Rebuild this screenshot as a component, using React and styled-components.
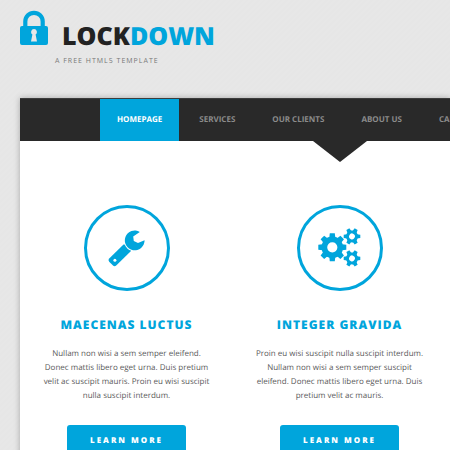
import React from "react";
import styled, { createGlobalStyle } from "styled-components";

const BLUE = "#00a5dc";
const DARK = "#292929";

const GlobalStyle = createGlobalStyle`
  *, *::before, *::after { box-sizing: border-box; }
  html { height: 100%; overflow: hidden; }
  body {
    margin: 0;
    min-height: 100%;
    overflow: hidden;
    background: repeating-linear-gradient(135deg, #e7e7e7 0 2px, #e6e6e6 2px 4px);
    color: #5a5a5a;
    font-family: "Open Sans", "Noto Sans", sans-serif;
    text-rendering: geometricPrecision;
  }
`;

const Header = styled.header`
  height: 98px;
  padding: 10px 20px 0;
`;

const Brand = styled.a`
  display: flex;
  align-items: flex-start;
  gap: 14px;
  color: #222;
  text-decoration: none;
`;

const LockIcon = styled.svg`
  display: block;
  width: 28px;
  height: 35px;
`;

const SiteName = styled.h1`
  margin: 9px 0 0;
  font-size: 25px;
  line-height: 34px;
  font-weight: 800;
  span { color: ${BLUE}; }
`;

const Tagline = styled.p`
  margin: 3px 0 0 35px;
  font-size: 7px;
  line-height: 12px;
  letter-spacing: 1px;
  text-transform: uppercase;
  color: #777;
`;

const Panel = styled.div`
  margin-left: 20px;
  background: #fff;
  box-shadow: 0 0 6px rgba(0, 0, 0, 0.28);
`;

const Nav = styled.nav`
  position: relative;
  background: ${DARK};
  border-top: 1px solid #3c3c3c;
  padding-left: 80px;
  &::after {
    content: "";
    position: absolute;
    top: 100%;
    left: 293px;
    border: solid transparent;
    border-width: 21px 27px 0;
    border-top-color: ${DARK};
  }
`;

const NavList = styled.ul`
  display: flex;
  gap: 3px;
  margin: 0;
  padding: 0;
  list-style: none;
`;

const NavLink = styled.a`
  display: block;
  padding: 0 17px;
  font-size: 8px;
  line-height: 42px;
  font-weight: 700;
  text-transform: uppercase;
  text-decoration: none;
  white-space: nowrap;
  color: ${(p) => (p.$active ? "#fff" : "#8b8b8b")};
  background: ${(p) => (p.$active ? BLUE : "transparent")};
`;

const Features = styled.main`
  display: grid;
  grid-template-columns: repeat(auto-fit, minmax(200px, 1fr));
  padding: 64px 4px 40px 0;
`;

const Feature = styled.section`
  display: flex;
  flex-direction: column;
  align-items: center;
  padding: 0 20px;
  text-align: center;
`;

const IconRing = styled.div`
  display: grid;
  place-items: center;
  width: 86px;
  height: 86px;
  border: 3px solid ${BLUE};
  border-radius: 50%;
  svg { display: block; width: 80px; height: 80px; }
`;

const FeatureTitle = styled.h2`
  margin: 25px 0 0;
  font-size: 12px;
  line-height: 18px;
  font-weight: 800;
  letter-spacing: 1px;
  text-transform: uppercase;
  white-space: nowrap;
  color: ${BLUE};
`;

const FeatureText = styled.p`
  margin: 13px 0 0;
  font-size: 8px;
  line-height: 14px;
`;

const ButtonLink = styled.a`
  margin-top: 22px;
  padding: 0 23px;
  border-radius: 3px;
  background: ${BLUE};
  color: #fff;
  font-size: 8px;
  line-height: 31px;
  font-weight: 800;
  letter-spacing: 2px;
  text-transform: uppercase;
  text-decoration: none;
  white-space: nowrap;
`;

function Lock() {
  return (
    <LockIcon viewBox="0 0 28 35" aria-hidden="true">
      <path d="M5.3 17V11.5a8.7 8.7 0 0 1 17.4 0V17" fill="none" stroke={BLUE} strokeWidth="4.2" />
      <rect x="0" y="16" width="28" height="19" rx="2" fill={BLUE} />
      <path d="M14 19a3 3 0 0 0-1.6 5.5L11 31.5h6l-1.4-7A3 3 0 0 0 14 19z" fill="#e7e7e7" />
    </LockIcon>
  );
}

function Wrench() {
  return (
    <svg viewBox="0 0 80 80" fill={BLUE} aria-hidden="true">
      <path d="M36.5 36.6h3l4.5 4.5v2L29.2 57.6q-1.7 1.5-3.2 0l-3.8-3.8q-1.5-1.7 0-3.2z" />
      <circle cx="27.9" cy="52.2" r="1.5" fill="#fff" />
      <circle cx="47.8" cy="32.6" r="10.8" fill="#fff" />
      <path d="M52.8 23.9a9.9 9.9 0 1 0 4.8 8.4L51 34.9l-4.2-1.8-.6-4.6z" />
    </svg>
  );
}

function Gear({ x, y, radius, hole, teeth, root, tooth }) {
  const angles = Array.from({ length: teeth }, (_, i) => (i * 360) / teeth);
  return (
    <g transform={`translate(${x} ${y})`}>
      <circle r={(root + hole) / 2} fill="none" stroke={BLUE} strokeWidth={root - hole} />
      {angles.map((angle) => (
        <path
          key={angle}
          transform={`rotate(${angle})`}
          d={`M${-tooth - 0.5} ${1 - root}L${-tooth} ${-radius}H${tooth}L${tooth + 0.5} ${1 - root}Z`}
          fill={BLUE}
        />
      ))}
    </g>
  );
}

function Gears() {
  return (
    <svg viewBox="0 0 80 80" aria-hidden="true">
      <Gear x={32.3} y={39.3} radius={14} root={10.8} hole={5.1} teeth={8} tooth={2.5} />
      <g transform="rotate(30 52 28.4)">
        <Gear x={52} y={28.4} radius={8.3} root={6} hole={2.9} teeth={6} tooth={1.7} />
      </g>
      <g transform="rotate(30 52 50.4)">
        <Gear x={52} y={50.4} radius={8.3} root={6} hole={2.9} teeth={6} tooth={1.7} />
      </g>
    </svg>
  );
}

const links = ["Homepage", "Services", "Our Clients", "About Us", "Careers"];

const features = [
  {
    title: "Maecenas luctus",
    icon: <Wrench />,
    text: "Nullam non wisi a sem semper eleifend. Donec mattis libero eget urna. Duis pretium velit ac suscipit mauris. Proin eu wisi suscipit nulla suscipit interdum.",
  },
  {
    title: "Integer gravida",
    icon: <Gears />,
    text: "Proin eu wisi suscipit nulla suscipit interdum. Nullam non wisi a sem semper suscipit eleifend. Donec mattis libero eget urna. Duis pretium velit ac mauris.",
  },
];

export default function App() {
  return (
    <>
      <GlobalStyle />
      <Header>
        <Brand href="#">
          <Lock />
          <SiteName>LOCK<span>DOWN</span></SiteName>
        </Brand>
        <Tagline>A free HTML5 template</Tagline>
      </Header>
      <Panel>
        <Nav>
          <NavList>
            {links.map((label, i) => (
              <li key={label}>
                <NavLink href="#" $active={i === 0}>{label}</NavLink>
              </li>
            ))}
          </NavList>
        </Nav>
        <Features>
          {features.map(({ title, icon, text }) => (
            <Feature key={title}>
              <IconRing>{icon}</IconRing>
              <FeatureTitle>{title}</FeatureTitle>
              <FeatureText>{text}</FeatureText>
              <ButtonLink href="#">Learn More</ButtonLink>
            </Feature>
          ))}
        </Features>
      </Panel>
    </>
  );
}
